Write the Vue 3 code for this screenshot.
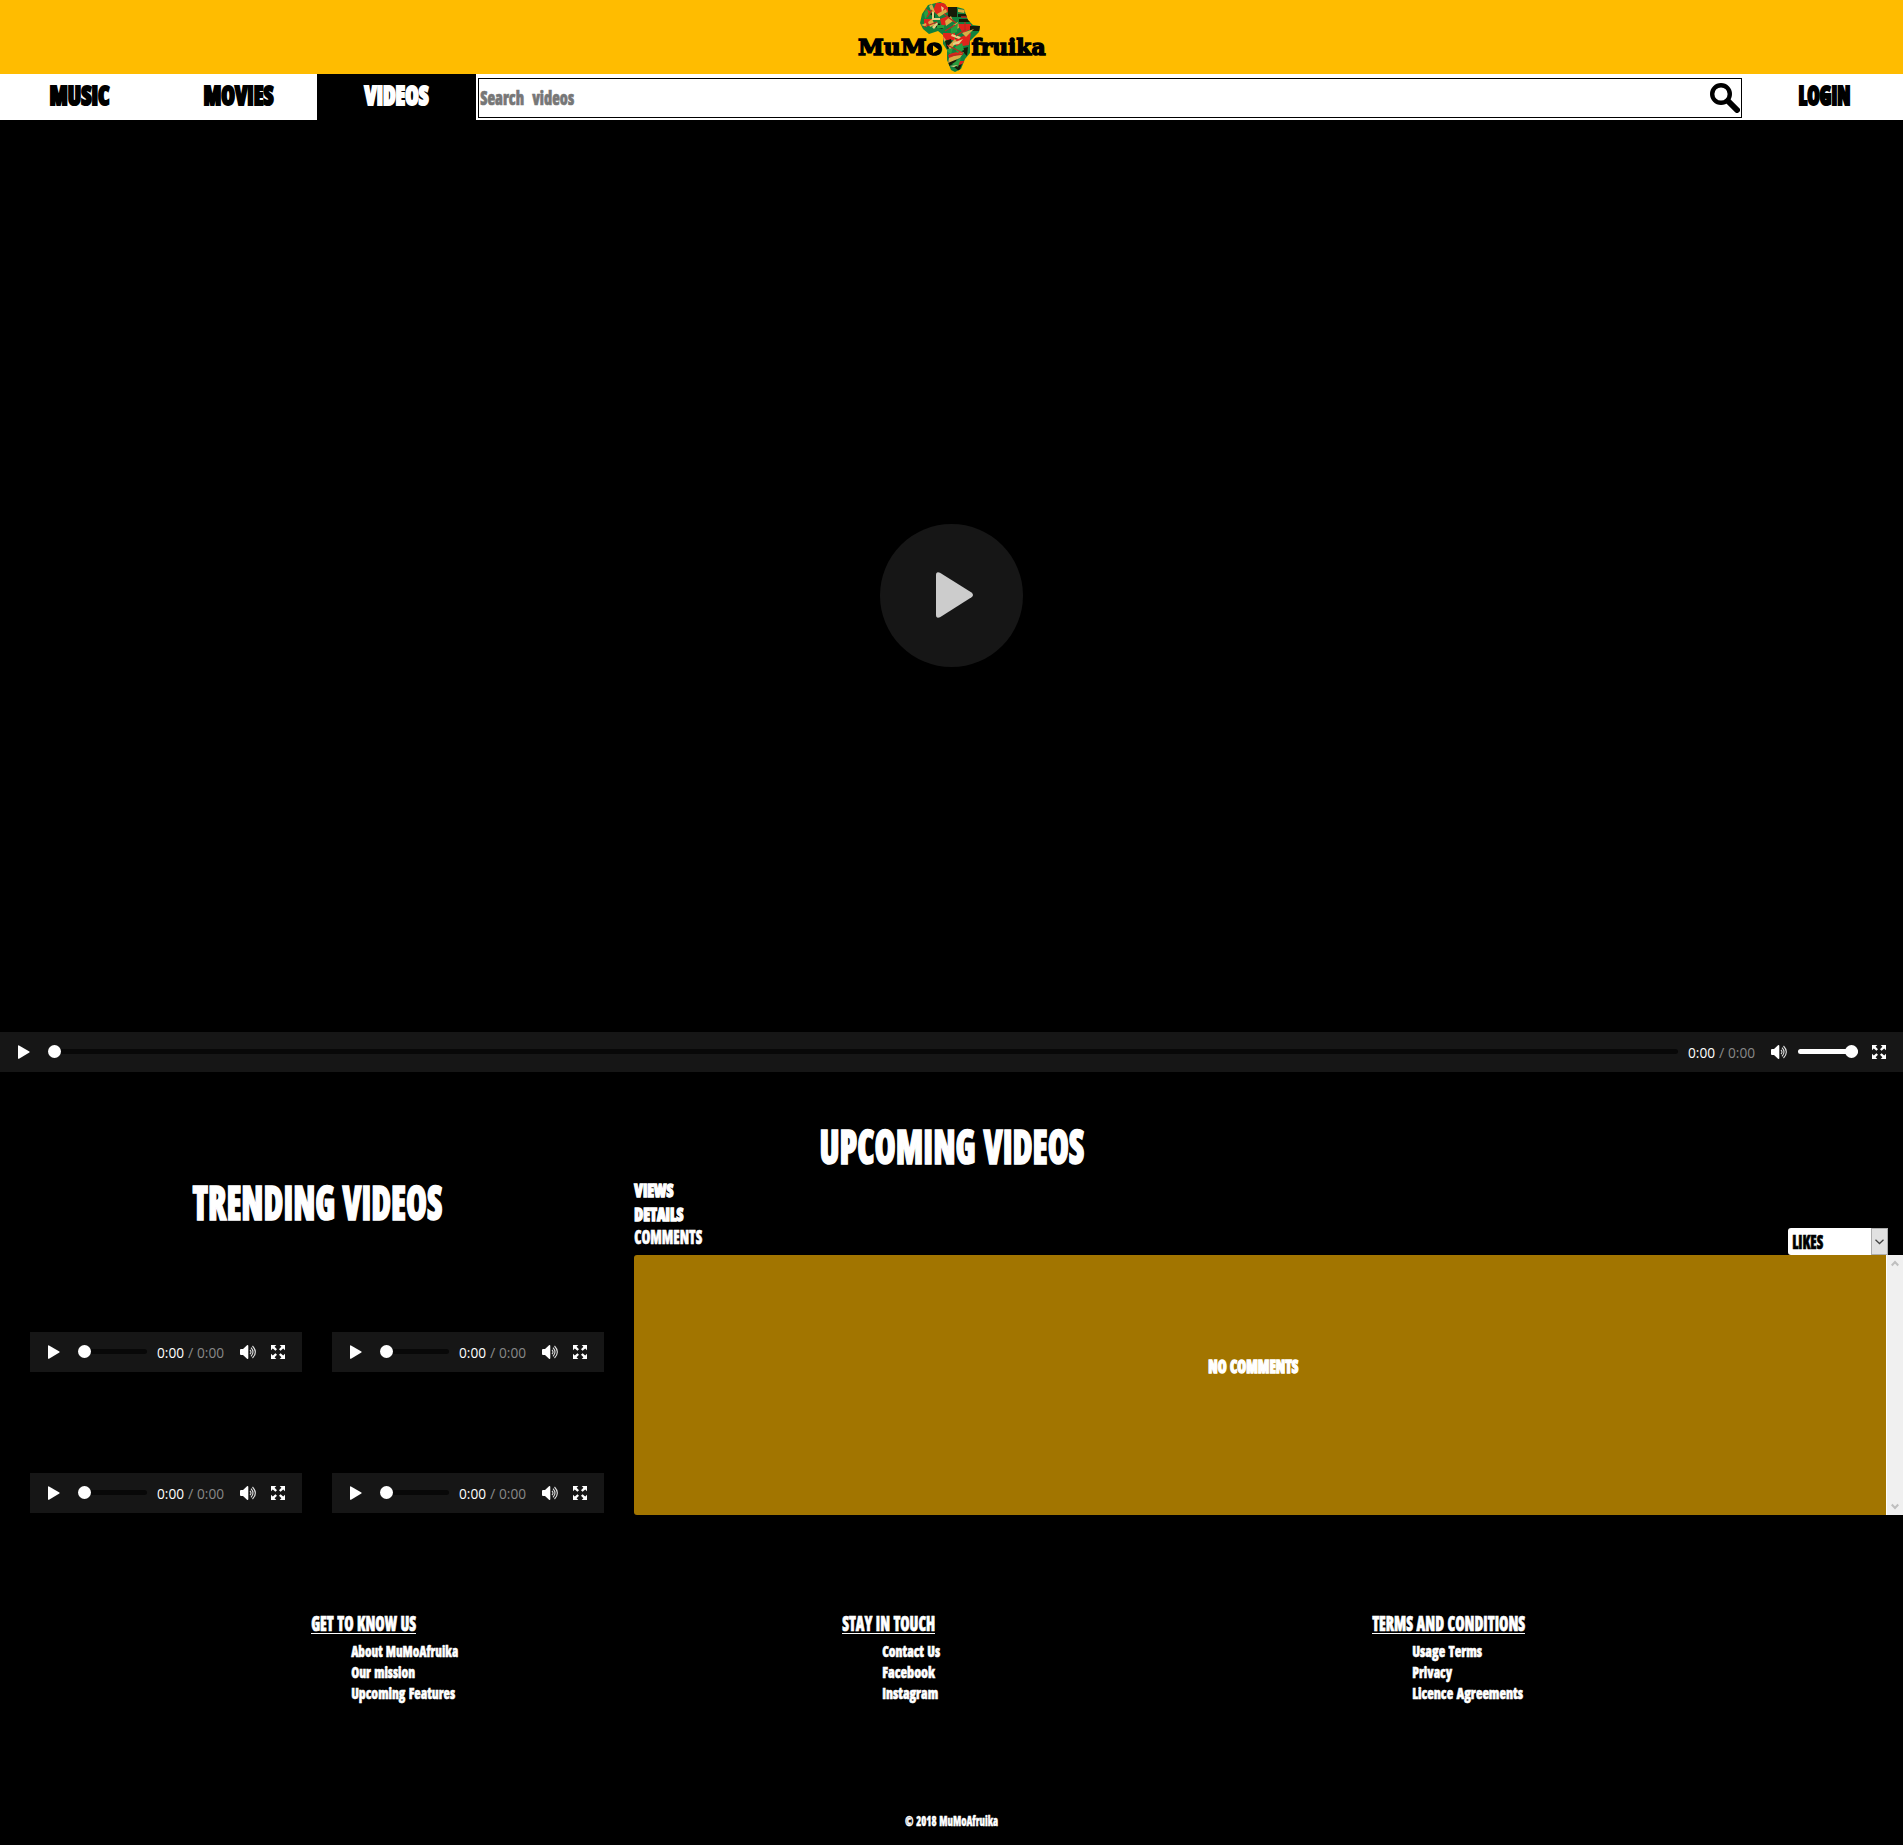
<script setup>
import { h } from 'vue'

// Condensed display lettering: the box is exactly as tall as the capitals.
const Label = (p) => {
  const stroke = p.cap * (p.bold ? 0.1 : 0.045)
  return h('svg', { class: 'label', width: p.w, height: p.cap, 'aria-label': p.t }, [
    h('text', {
      x: stroke / 4,
      y: p.cap - stroke / 2,
      textLength: p.w,
      lengthAdjust: 'spacingAndGlyphs',
      'font-size': (p.cap - stroke * 0.8) / 0.714,
      fill: 'currentColor',
      stroke: 'currentColor',
      'stroke-width': stroke,
    }, p.t),
  ])
}
Label.props = { t: String, w: Number, cap: Number, bold: Boolean }

const PlayerBar = (p) => {
  const track = h('div', { class: 'track' }, [h('i', { class: 'knob' })])
  const time = h('svg', { class: 'time', width: 67, height: 20 }, [
    h('text', { x: 0, y: 16, textLength: 27, lengthAdjust: 'spacingAndGlyphs', fill: '#fff' }, '0:00'),
    h('text', { x: 31, y: 16, fill: '#888' }, '/'),
    h('text', { x: 40, y: 16, textLength: 27, lengthAdjust: 'spacingAndGlyphs', fill: '#888' }, '0:00'),
  ])
  return h('div', { class: 'bar' }, [
    h('svg', { class: 'play', width: 12, height: 14 }, [h('path', { d: 'M0 .8Q0 0 1 .4L11.4 6.4Q12 7 11.4 7.6L1 13.7Q0 14 0 13.2Z', fill: '#fff' })]),
    track,
    time,
    h('svg', { class: 'sound', width: 17, height: 14, viewBox: '0 0 17 14' }, [
      h('path', { d: 'M0 4.5L1 4H3L7 .3Q8.3-.3 8.3 1V13Q8.3 14.3 7 13.7L3 10H1L0 9.5Z', fill: '#fff' }),
      h('path', { d: 'M10 4.8Q12 7 10 9.2M11 2.7Q15 7 11 11.3M12.5 1Q18.2 7 12.5 13', fill: 'none', stroke: '#ddd', 'stroke-width': 1.1 }),
    ]),
    p.volume ? h('div', { class: 'volume' }, [h('i', { class: 'knob' })]) : null,
    h('svg', { class: 'full', width: 14, height: 14 }, [
      h('path', { d: 'M0 0H5.3L3.6 1.7L6 4.2L4.4 5.8L1.8 3.4L0 5.2ZM14 0V5.2L12.2 3.4L9.6 5.8L8 4.2L10.4 1.7L8.7 0ZM0 14V8.8L1.8 10.6L4.4 8.2L6 9.8L3.6 12.3L5.3 14ZM14 14H8.7L10.4 12.3L8 9.8L9.6 8.2L12.2 10.6L14 8.8Z', fill: '#fff' }),
    ]),
  ])
}
PlayerBar.props = { volume: Boolean }

const footer = [
  { t: 'GET TO KNOW US', w: 105, items: [['About MuMoAfruika', 107], ['Our mission', 64], ['Upcoming Features', 104]] },
  { t: 'STAY IN TOUCH', w: 93, items: [['Contact Us', 58], ['Facebook', 53], ['Instagram', 56]] },
  { t: 'TERMS AND CONDITIONS', w: 153, items: [['Usage Terms', 70], ['Privacy', 40], ['Licence Agreements', 111]] },
]
</script>

<template>
  <div class="page">
    <header class="brand">
      <svg width="190" height="74" viewBox="0 0 190 74">
        <defs>
          <clipPath id="africa">
            <path d="M71 5L83 2L88 4L90 7L100 7L107 9L111 20L116 25L123 26L122 32L113 41L113 53L108 59L104 69L98 72L94 70L90 60L90 50L86 44L86 35L81 31L72 34L66 29L63 23L65 14Z" />
          </clipPath>
        </defs>
        <g class="wordmark">
          <text x="1" y="54.7" textLength="84" lengthAdjust="spacingAndGlyphs">MuMo</text>
          <text x="114.5" y="54.7" textLength="74" lengthAdjust="spacingAndGlyphs">fruika</text>
        </g>
        <ellipse cx="77.5" cy="49" rx="6" ry="5" fill="#000" />
        <path d="M76 45.5L81.5 49.5L76 53Z" fill="#ffbc00" />
        <g clip-path="url(#africa)">
          <path d="M60 0h66v74h-66z" fill="#12813d" />
          <path d="M79 3l12 0v9l-9 4-6-5zM67 19h8v7h-8zM83 19l8-3 3 5-9 6zM100 24h14v5l-8 4zM86 33h12v7h-12zM96 40l18-7-2 12-12 2zM92 54l12-3v5l-12 5zM98 61h10l-7 7zM68 8l6 4-5 3z" fill="#df251b" />
          <path d="M91 7h9v10h-9zM101 14h12v3h-12zM102 19h12v3h-12zM113 26h10v5h-10zM78 27l4-4 4 6zM88 41l6-2 2 8-6 2zM103 49l8-2-1 9zM91 61l9-2-2 4-6 3zM97 67l8-3-3 7zM73 14l4-2 1 6z" fill="#171b08" />
          <path d="M72 6l3-2 3 8-3 1zM80 14l9-5 1 3-8 5zM71 22l4-3 3 6-5 2zM88 21l6-5 2 5-7 5zM101 9l7 1-1 3-6-1zM96 25l5-3 1 6-5 2zM105 33l12-4-8 8zM91 46l7-7 2 3-7 8zM92 58l15-6-4 6-12 5zM64 25l5-2 1 4zM86 36l3 4-2 2z" fill="#d8ad46" />
          <path d="M67 13l3-4 2 6-4 4zM80 25h7v3h-7zM94 28l7-5-1 9-6 2zM98 47l7-4 2 7-7 3zM88 50l8-2-2 6zM95 64l9-6-3 9z" fill="#299d3e" />
          <path d="M75 12h2v6h6v2h-8zM91 15l8 7M95 34l9 3-2 2-8-3zM96 43l10-4-4 5-6 1zM84 6l3 2-2 4zM75 27l5-5 1 2-4 5zM93 66l8-1-4 2z" fill="#e8cf83" />
          <path d="M70 17l5-7M88 31l10-6M99 36l10-7M90 45l16 8M91 56l15-2M87 14l12 9M104 17h8M67 27l13-5M108 22v9" stroke="#ba2b20" stroke-width="1.3" />
        </g>
      </svg>
    </header>

    <nav class="nav">
      <a class="tab"><Label t="MUSIC" :w="60" :cap="21" bold /></a>
      <a class="tab"><Label t="MOVIES" :w="70" :cap="21" bold /></a>
      <a class="tab active"><Label t="VIDEOS" :w="64" :cap="21" bold /></a>
      <div class="search">
        <div class="hint"><Label t="Search" :w="44" :cap="14" /><Label t="videos" :w="42" :cap="14" /></div>
        <svg width="30" height="30" viewBox="0 0 30 30">
          <circle cx="11" cy="11" r="8.8" fill="none" stroke="#000" stroke-width="4.4" />
          <path d="M18 18L27 27" stroke="#000" stroke-width="6" stroke-linecap="round" />
        </svg>
      </div>
      <a class="tab login"><Label t="LOGIN" :w="52" :cap="21" bold /></a>
    </nav>

    <section class="hero">
      <div class="screen">
        <div class="big-play">
          <svg width="37" height="46" viewBox="0 0 37 46"><path d="M0 3Q0-.8 4 .7L35.5 20.5Q38.5 23 35.5 25.3L4 45.3Q0 46.8 0 43Z" fill="#ccc" /></svg>
        </div>
      </div>
      <PlayerBar volume />
    </section>

    <h1 class="upcoming"><Label t="UPCOMING VIDEOS" :w="265" :cap="35" /></h1>

    <main class="content">
      <section class="trending">
        <h2><Label t="TRENDING VIDEOS" :w="250" :cap="35" /></h2>
        <div class="grid"><PlayerBar v-for="n in 4" :key="n" /></div>
      </section>
      <section class="details">
        <div class="meta">
          <div class="facts">
            <Label t="VIEWS" :w="39" :cap="14" bold />
            <Label t="DETAILS" :w="49" :cap="14" bold />
            <Label t="COMMENTS" :w="68" :cap="14" />
          </div>
          <div class="select">
            <Label t="LIKES" :w="31" :cap="14" />
            <span class="drop"><svg width="9" height="6"><path d="M.5 .8L4.5 4.5L8.5 .8" fill="none" stroke="#444" stroke-width="1.3" /></svg></span>
          </div>
        </div>
        <div class="panel">
          <div class="comments"><Label t="NO COMMENTS" :w="90" :cap="14" bold /></div>
          <div class="scroll">
            <svg width="8" height="7"><path d="M.7 5.5L4 2L7.3 5.5" fill="none" stroke="#bfbfbf" stroke-width="2.2" /></svg>
            <svg width="8" height="7"><path d="M.7 1.5L4 5L7.3 1.5" fill="none" stroke="#bfbfbf" stroke-width="2.2" /></svg>
          </div>
        </div>
      </section>
    </main>

    <footer>
      <div class="columns">
        <div v-for="c in footer" :key="c.t" class="column">
          <div class="heading"><Label :t="c.t" :w="c.w" :cap="15" /></div>
          <div class="links"><Label v-for="i in c.items" :key="i[0]" :t="i[0]" :w="i[1]" :cap="11.5" /></div>
        </div>
      </div>
      <div class="copyright"><Label t="© 2018 MuMoAfruika" :w="93" :cap="10" /></div>
    </footer>
  </div>
</template>

<style>
body { margin: 0; background: #000; }
.label { display: block; overflow: visible; flex: none; font-family: "Open Sans", sans-serif; font-weight: 800; font-stretch: 75%; word-spacing: .07em; }
.bar { display: flex; align-items: center; box-sizing: border-box; height: 40px; padding: 0 17px 0 18px; background: #161616; }
.bar svg { flex: none; }
.bar .track { flex: 1; height: 5px; margin: 0 10px 0 20px; border-radius: 3px; background: #080808; display: flex; align-items: center; position: relative; top: -1px; }
.bar .knob { width: 13px; height: 13px; border-radius: 50%; background: #fff; flex: none; margin-left: -2px; }
.bar .time { font: 14.5px "Open Sans", sans-serif; overflow: visible; }
.bar .sound { margin-left: 16px; margin-right: -1px; }
.bar .volume { width: 60px; height: 5px; margin-left: 11px; margin-right: -1px; border-radius: 3px; background: #fff; display: flex; justify-content: flex-end; align-items: center; position: relative; top: -1px; }
.bar .full { margin-left: 15px; }
</style>

<style scoped>
.page { width: 1903px; height: 1845px; background: #000; color: #fff; overflow: hidden; }
h1, h2 { margin: 0; }
.brand { height: 74px; background: #ffbc00; display: flex; justify-content: center; }
.brand svg { display: block; overflow: visible; }
.wordmark { font: 700 23px "DejaVu Serif", serif; fill: #000; stroke: #000; stroke-width: 1.5; }
.nav { height: 46px; background: #fff; display: flex; color: #000; }
.tab { width: 158.6px; display: flex; justify-content: center; padding-top: 11px; box-sizing: border-box; height: 46px; }
.tab.active { background: #000; color: #fff; }
.tab.login { flex: 1; padding-left: 2px; }
.search { width: 1264px; height: 40px; margin: 4px 0 0 2.5px; border: 1px solid #000; box-sizing: border-box; display: flex; justify-content: space-between; padding: 4px 1px 0; color: #777; }
.hint { display: flex; gap: 8px; padding-top: 8px; }
.hero { height: 952px; display: flex; flex-direction: column; }
.screen { flex: 1; display: flex; justify-content: center; padding-top: 404px; }
.big-play { width: 143px; height: 143px; border-radius: 50%; background: #161616; display: flex; align-items: center; justify-content: center; padding: 0 0 1px 6px; box-sizing: border-box; }
.upcoming { display: flex; justify-content: center; margin-top: 58px; height: 54px; }
.content { display: flex; height: 331px; }
.trending { width: 634px; padding-top: 2px; box-sizing: border-box; }
.trending h2 { display: flex; justify-content: center; }
.grid { display: grid; grid-template-columns: 272px 272px; column-gap: 30px; row-gap: 101px; margin: 111px 0 0 30px; }
.details { flex: 1; }
.meta { height: 71px; display: flex; justify-content: space-between; align-items: flex-end; }
.facts { height: 71px; display: flex; flex-direction: column; gap: 10px; }
.facts > :last-child { margin-top: -2px; }
.select { width: 100px; height: 27px; margin-right: 15px; border-radius: 3px; background: #fff; color: #000; display: flex; align-items: center; justify-content: space-between; padding-left: 4px; box-sizing: border-box; }
.drop { width: 17px; height: 27px; box-sizing: border-box; background: #e1e1e1; border: 1px solid #adadad; display: flex; align-items: center; justify-content: center; }
.panel { height: 260px; display: flex; }
.comments { flex: 1; background: #a27500; border-radius: 3px 0 0 3px; display: flex; justify-content: center; padding: 105px 15px 0 0; }
.scroll { width: 17px; background: #f0f0f0; border-left: 1px solid #fff; box-sizing: border-box; display: flex; flex-direction: column; justify-content: space-between; align-items: center; padding: 5px 0; }
.columns { display: grid; grid-template-columns: 530.5px 530.5px 400px; margin: 101px 0 0 311px; height: 199px; }
.heading { width: max-content; height: 17px; border-bottom: 1px solid #fff; }
.links { padding: 11.5px 0 0 40px; display: flex; flex-direction: column; gap: 9.5px; }
.copyright { display: flex; justify-content: center; padding-top: 1px; }
</style>
